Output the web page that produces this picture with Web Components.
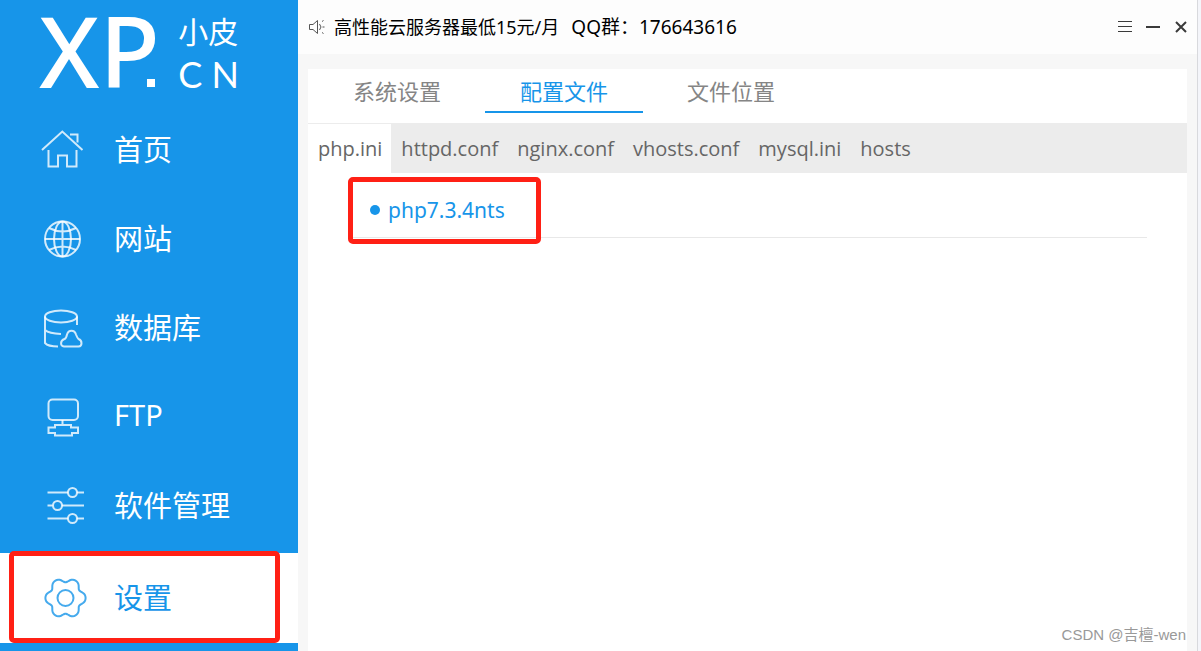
<!DOCTYPE html>
<html lang="zh-CN">
<head>
<meta charset="utf-8">
<title>小皮面板</title>
<style>
    body{
        margin:0;
        font-family:"Noto Sans","Noto Sans CJK SC",sans-serif;
    }
</style>
</head>
<body>
<panel-app>
    <side-bar slot="side">
        <side-item icon="home">首页</side-item>
        <side-item icon="globe">网站</side-item>
        <side-item icon="database">数据库</side-item>
        <side-item icon="ftp">FTP</side-item>
        <side-item icon="sliders">软件管理</side-item>
        <side-item icon="gear" active>设置</side-item>
    </side-bar>
    <title-bar>
        <span>高性能云服务器最低15元/月</span>
        <span slot="contact">QQ群：176643616</span>
    </title-bar>
    <settings-card>
        <page-tab slot="tabs">系统设置</page-tab>
        <page-tab slot="tabs" active>配置文件</page-tab>
        <page-tab slot="tabs">文件位置</page-tab>
        <file-tab slot="files" active>php.ini</file-tab>
        <file-tab slot="files">httpd.conf</file-tab>
        <file-tab slot="files">nginx.conf</file-tab>
        <file-tab slot="files">vhosts.conf</file-tab>
        <file-tab slot="files">mysql.ini</file-tab>
        <file-tab slot="files">hosts</file-tab>
        <version-link>php7.3.4nts</version-link>
    </settings-card>
    <water-mark slot="mark">CSDN @吉檀-wen</water-mark>
</panel-app>

<script>
// six rounded teeth around (25.5, 22)
function gearPath() {
    const points = [];
    for (let deg = 0; deg < 360; deg += 4) {
        const a = deg * Math.PI / 180;
        const r = 18.2 + 2.2 * Math.cos(6 * a) - 0.3 * Math.cos(12 * a);
        points.push((25.5 + r * Math.cos(a)).toFixed(2) + ' ' + (22 + r * Math.sin(a)).toFixed(2));
    }
    return 'M' + points.join('L') + 'Z';
}

const icons = {
    home: '<path d="M2 22 22.3 3.5 42.5 22M30 6.5h7.5v8M8.5 22v16.5h9.5v-11h9v11h9.5v-16.5"/>',
    globe: '<circle cx="22.5" cy="22" r="17.5"/><ellipse cx="22.5" cy="22" rx="8.5" ry="17.5"/><path d="M22.5 4.5v35M5 22h35M9 11q13.5 7 27 0M9 33q13.5-7 27 0"/>',
    database: '<ellipse cx="21" cy="10.5" rx="16" ry="6"/><path d="M5 10.500v26.500q3 3.500 13 3.500M5 24q4 3.500 16 4M37 10.500v8.500"/><path d="M24 40.500h14.500c4-.5 4-6 0-7.500-1-.5-1.500-2-2.500-4.500-1.500-5-7.500-5-9 0-.5 2.500-1 4-2.500 4.500-4.500 1.500-4.500 7-.5 7.500z"/>',
    ftp: '<rect x="8.5" y="4.5" width="29.5" height="20.5" rx="4"/><path d="M22.5 25v5M15 30h16v2.500h7V38h-6v2.500H15V38H8.500v-5.500H15z"/>',
    sliders: '<path d="M7.5 8.5H28M37 8.5h7M7.5 21.5h5M22 21.5h22M7.5 34.5H28M37 34.5h7"/><circle cx="32.5" cy="8.5" r="4.5"/><circle cx="17.5" cy="21.5" r="4.5"/><circle cx="32.5" cy="34.5" r="4.5"/>',
    gear: '<path d="' + gearPath() + '"/><circle cx="25.5" cy="22" r="8"/>'
};

class PanelApp extends HTMLElement {
    constructor() {
        super();
        this.attachShadow({mode: 'open'}).innerHTML = `
            <style>
                :host{
                    display:flex;
                    min-height:100vh;
                    background:#f4f5fa;
                }
                main{
                    position:relative;
                    flex:1;
                    display:flex;
                    flex-direction:column;
                    margin-right:3px;
                    border-right:1px solid #d8d9dd;
                    background:#f7f7f7;
                }
            </style>
            <slot name="side"></slot>
            <main>
                <slot></slot>
                <slot name="mark"></slot>
            </main>
        `;
    }
}

class SideBar extends HTMLElement {
    constructor() {
        super();
        this.attachShadow({mode: 'open'}).innerHTML = `
            <style>
                :host{
                    display:block;
                    flex:0 0 298px;
                    background:#1795e9;
                    color:#fff;
                }
                .logo{
                    display:flex;
                    justify-content:space-between;
                    height:105px;
                    padding:0 59px 0 39px;
                }
                .xp{
                    position:relative;
                    font-size:99px;
                    line-height:100px;
                    font-weight:500;
                }
                /* square dot tucked under the P */
                .xp::after{
                    content:"";
                    position:absolute;
                    right:5px;
                    top:79px;
                    width:8px;
                    height:8px;
                    background:#fff;
                }
                .sub{
                    padding-top:16px;
                    font-size:30px;
                    line-height:32px;
                }
                .cn{
                    font-family:Lato,sans-serif;
                    font-size:36px;
                    line-height:52px;
                }
            </style>
            <div class="logo">
                <div class="xp">XP</div>
                <div class="sub">
                    <div>小皮</div>
                    <div class="cn">C N</div>
                </div>
            </div>
            <nav><slot></slot></nav>
        `;
    }
}

class SideItem extends HTMLElement {
    constructor() {
        super();
        this.attachShadow({mode: 'open'}).innerHTML = `
            <style>
                :host{display:block;}
                a{
                    display:flex;
                    align-items:center;
                    gap:26px;
                    height:89px;
                    padding-left:40px;
                    color:#fff;
                    font-size:29px;
                    text-decoration:none;
                }
                span{padding-bottom:4px;}
                svg{
                    width:48px;
                    height:44px;
                    fill:none;
                    stroke:currentColor;
                    stroke-width:2;
                    stroke-opacity:.8;
                }
                :host([active]){
                    position:relative;
                    margin-top:3px;
                    background:#fff;
                }
                :host([active]) a{
                    height:90px;
                    color:#1795e9;
                }
                /* highlight frame over the row */
                :host([active])::after{
                    content:"";
                    position:absolute;
                    inset:-2px 18px 0 9px;
                    border:5px solid #ff2015;
                    border-radius:5px;
                    pointer-events:none;
                }
            </style>
            <a href="#">
                <svg viewBox="0 0 48 44" aria-hidden="true">${icons[this.getAttribute('icon')]}</svg>
                <span><slot></slot></span>
            </a>
        `;
    }
}

class TitleBar extends HTMLElement {
    constructor() {
        super();
        this.attachShadow({mode: 'open'}).innerHTML = `
            <style>
                :host{
                    display:flex;
                    align-items:center;
                    height:54px;
                    padding:0 6px 0 10px;
                    background:#fdfdfd;
                    color:#000;
                    font-size:18px;
                }
                .text{
                    flex:1;
                    display:flex;
                    align-items:baseline;
                    gap:12px;
                    padding:0 0 2px 8px;
                }
                .contact{font-size:19px;}
                svg{
                    display:block;
                    fill:none;
                    stroke:#3a3a3a;
                }
                .speaker{stroke:#555;}
                .controls{
                    display:flex;
                    gap:8px;
                }
                button{
                    padding:0;
                    border:0;
                    background:none;
                }
            </style>
            <svg class="speaker" width="18" height="18" aria-hidden="true">
                <path d="M1.5 6.5h3.500l4.500-4v13l-4.500-4H1.500zM11.500 6q3 3 0 6"/>
                <path d="M14 3.500l1.500-1M14 14.500l1.500 1M14.500 9h2"/>
            </svg>
            <div class="text">
                <slot></slot>
                <div class="contact"><slot name="contact"></slot></div>
            </div>
            <div class="controls">
                <button aria-label="菜单"><svg width="20" height="20"><path d="M3 4.500h14M3 9.500h14M3 14.500h14"/></svg></button>
                <button aria-label="最小化"><svg width="20" height="20"><path d="M3 10h14" stroke-width="2"/></svg></button>
                <button aria-label="关闭"><svg width="20" height="20"><path d="M5 5l10 10M15 5L5 15" stroke-width="2"/></svg></button>
            </div>
        `;
    }
}

class SettingsCard extends HTMLElement {
    constructor() {
        super();
        this.attachShadow({mode: 'open'}).innerHTML = `
            <style>
                :host{
                    flex:1;
                    display:flex;
                    flex-direction:column;
                    margin:15px 10px 0;
                    background:#fff;
                }
                .tabs{
                    display:flex;
                    gap:9px;
                    height:54px;
                    padding-left:10px;
                    border-bottom:1px solid #ececec;
                }
                .files{
                    display:flex;
                    height:49px;
                    background:#ececec;
                }
                .versions{
                    height:64px;
                    margin:0 40px;
                    border-bottom:1px solid #e8e8e8;
                }
            </style>
            <div class="tabs"><slot name="tabs"></slot></div>
            <div class="files"><slot name="files"></slot></div>
            <div class="versions"><slot></slot></div>
        `;
    }
}

class PageTab extends HTMLElement {
    constructor() {
        super();
        this.attachShadow({mode: 'open'}).innerHTML = `
            <style>
                :host{display:block;}
                button{
                    height:44px;
                    padding:0 35px;
                    border:0;
                    border-bottom:2px solid transparent;
                    background:none;
                    color:#858585;
                    font:22px "Noto Sans CJK SC",sans-serif;
                }
                :host([active]) button{
                    border-color:#1795e9;
                    color:#1795e9;
                }
            </style>
            <button><slot></slot></button>
        `;
    }
}

class FileTab extends HTMLElement {
    constructor() {
        super();
        this.attachShadow({mode: 'open'}).innerHTML = `
            <style>
                :host{display:block;}
                button{
                    height:100%;
                    padding:0 9px 0 10px;
                    border:0;
                    background:none;
                    color:#666;
                    font:20px "Open Sans",sans-serif;
                }
                :host([active]) button{background:#fff;}
            </style>
            <button><slot></slot></button>
        `;
    }
}

class VersionLink extends HTMLElement {
    constructor() {
        super();
        this.attachShadow({mode: 'open'}).innerHTML = `
            <style>
                :host{
                    position:relative;
                    display:inline-flex;
                    align-items:center;
                    box-sizing:border-box;
                    height:64px;
                    padding:10px 36px 0 22px;
                }
                a{
                    display:flex;
                    align-items:center;
                    gap:8px;
                    color:#1795e9;
                    font-size:21px;
                    text-decoration:none;
                }
                a::before{
                    content:"";
                    width:10px;
                    height:10px;
                    border-radius:50%;
                    background:#1795e9;
                }
                /* highlight frame around the link */
                :host::after{
                    content:"";
                    position:absolute;
                    inset:4px 0 -7px 0;
                    border:5px solid #ff2015;
                    border-radius:5px;
                    pointer-events:none;
                }
            </style>
            <a href="#"><slot></slot></a>
        `;
    }
}

class WaterMark extends HTMLElement {
    constructor() {
        super();
        this.attachShadow({mode: 'open'}).innerHTML = `
            <style>
                :host{
                    position:absolute;
                    right:11px;
                    bottom:6px;
                    color:#999;
                    font:15px/20px "Liberation Sans","Noto Sans CJK SC",sans-serif;
                }
            </style>
            <slot></slot>
        `;
    }
}

customElements.define('panel-app', PanelApp);
customElements.define('side-bar', SideBar);
customElements.define('side-item', SideItem);
customElements.define('title-bar', TitleBar);
customElements.define('settings-card', SettingsCard);
customElements.define('page-tab', PageTab);
customElements.define('file-tab', FileTab);
customElements.define('version-link', VersionLink);
customElements.define('water-mark', WaterMark);
</script>
</body>
</html>
